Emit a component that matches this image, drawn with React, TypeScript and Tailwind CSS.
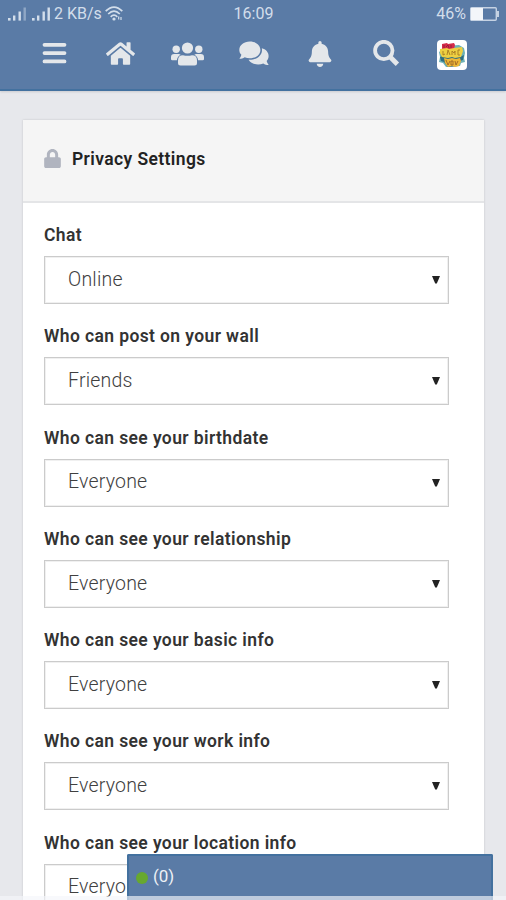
import { FaBell, FaHome, FaLock } from "react-icons/fa";

const settings = [
  { label: "Chat", value: "Online" },
  { label: "Who can post on your wall", value: "Friends" },
  { label: "Who can see your birthdate", value: "Everyone" },
  { label: "Who can see your relationship", value: "Everyone" },
  { label: "Who can see your basic info", value: "Everyone" },
  { label: "Who can see your work info", value: "Everyone" },
  { label: "Who can see your location info", value: "Everyone" },
];

function Signal({ weak = false }: { weak?: boolean }) {
  return (
    <svg className="h-[14px] w-[19px]" viewBox="0 0 19 14" fill="currentColor">
      <rect x="0" y="11" width="2.6" height="2.6" />
      <rect x="5" y="8.5" width="2.4" height="5.1" />
      <rect x="10.5" y="4.5" width="2.4" height="9.1" />
      <rect x="15.5" y=".5" width="2.4" height="13.1" opacity={weak ? 0.45 : 1} />
    </svg>
  );
}

function Wifi() {
  return (
    <svg className="h-[15px] w-[18px]" viewBox="0 0 18 15" fill="none" stroke="currentColor" strokeWidth="1.7">
      <path d="M.7 5.2Q9-3 17.3 5.2M3.2 8Q9 2.2 14.8 8M5.7 10.8Q9 7.4 12.3 10.8" />
      <circle cx="9" cy="13" r="1.6" fill="currentColor" stroke="none" />
      <path d="M13.7 13.5v-3M16 11v3" strokeWidth="1.2" />
    </svg>
  );
}

function Battery() {
  return (
    <svg className="h-[14px] w-[29px]" viewBox="0 0 29 14">
      <rect x=".7" y=".7" width="25.6" height="12.6" rx="1" fill="none" stroke="#c5d2e3" strokeWidth="1.4" />
      <rect x="1" y="1" width="12" height="12" fill="#f3f6fa" />
      <rect x="27" y="4" width="2" height="6" fill="#c5d2e3" />
    </svg>
  );
}

function Avatar() {
  return (
    <svg className="h-[30px] w-[30px]" viewBox="0 0 30 30">
      <rect width="30" height="30" rx="4" fill="#fff" />
      <path d="M2 12l3-2 3-4 14-1 5 3 1 5-1 5 1 4-4 1-1 3-14 1-3-4-4-1 1-5z" fill="#6db2b7" />
      <path d="M3 17l3-1 17 1 4-2-1 5-3 1-2 5-10 1-4-5-3-1z" fill="#2d6d83" />
      <path d="M5 4l5-1 1 1 6-1 1 2-1 4-6 1-6-1z" fill="#d42b49" />
      <path d="M3 9l7-1 2 1 5-1 8-1 1 4-2 6-6 1-3-1-4 1-6-1-2-4z" fill="#edcf42" />
      <path d="M7 18l4 1 4-1 4 1 4-1 1 3-2 5-4 1-3-1-4 1-3-4z" fill="#edb735" />
      <path d="M6 11v4l2-1M10 15l1-5 2 5M15 15v-4l2 2 1-2v4M23 10h-2v5h2" fill="none" stroke="#a47923" strokeWidth=".9" />
      <path d="M9 20l2 5 2-4M14 21v4h2v-4zM18 21l1 4 2-4" fill="none" stroke="#9a6426" strokeWidth=".9" />
      <path d="M7 5v3M9 7l2-2 1 3M14 5v3" fill="none" stroke="#861d39" strokeWidth=".8" />
    </svg>
  );
}

function StatusBar() {
  return (
    <div className="grid h-[27px] grid-cols-3 items-center pl-[8px] pr-[7px] text-[16px] text-[#d3deeb]">
      <div className="flex items-center whitespace-nowrap">
        <Signal weak />
        <span className="w-[5px]" />
        <Signal />
        <span className="ml-[3px] mr-[3px]">2 KB/s</span>
        <Wifi />
      </div>
      <span className="text-center">16:09</span>
      <div className="flex items-center justify-end gap-[4px]">
        <span>46%</span>
        <Battery />
      </div>
    </div>
  );
}

function NavBar() {
  return (
    <nav className="grid grid-cols-[repeat(7,66.3px)] items-center justify-items-center pt-[13px] pl-[21.5px] text-[#e4e7ea]">
      <svg className="-mt-[3px] size-[27px]" viewBox="0 0 27 27" stroke="currentColor" strokeWidth="3.8" strokeLinecap="round">
        <path d="M3.5 4.8h20M3.5 13.1h20M3.5 21.4h20" />
      </svg>
      <FaHome className="-mt-[3px] size-[29px]" />
      <svg className="-mt-[3px] h-[24px] w-[33px]" viewBox="0 0 33 24" fill="currentColor">
        <circle cx="16.5" cy="6" r="5.6" />
        <circle cx="5.2" cy="7.2" r="3.7" />
        <circle cx="27.8" cy="7.2" r="3.7" />
        <path d="M7 21v-2.500Q7 13.200 12 13.200Q16.500 14.500 21 13.200Q26 13.200 26 18.500V21Q26 23.500 23.500 23.500H9.500Q7 23.500 7 21z" />
        <path d="M0 15.200Q0 12 3.200 12H7.500Q9 12 9.600 12.700Q6.300 14.500 5.900 18.300H1.300Q0 18.300 0 17zM33 15.200Q33 12 29.800 12H25.500Q24 12 23.400 12.700Q26.700 14.500 27.100 18.300H31.700Q33 18.300 33 17z" />
      </svg>
      <svg className="-mt-[3px] h-[25px] w-[30px]" viewBox="0 0 30 25" fill="currentColor">
        <path d="M10.800 .5C16.800 .5 21.400 4.100 21.400 8.900S16.800 17.300 10.800 17.300C8.900 17.300 7.200 16.900 5.700 16.200C4.200 17.200 2.300 17.700 .4 17.700C1.400 16.500 2.100 15.100 2.400 13.800C1 12.400 .3 10.800 .3 8.900C.3 4.100 4.800 .5 10.800 .5z" />
        <path d="M22.800 7.300C26.800 8.200 29.600 11.300 29.600 15C29.600 16.900 28.900 18.600 27.600 20C28 21.500 28.700 22.800 29.700 24C27.700 24 25.800 23.400 24.300 22.400C22.800 23.100 21.100 23.500 19.200 23.500C14.900 23.500 11.300 21.700 9.600 18.800C16.900 19.200 23 15 23 8.900Q23 8.100 22.800 7.300z" />
      </svg>
      <FaBell className="-mt-[3px] size-[26px]" />
      <svg className="-mt-[3px] size-[27px]" viewBox="0 0 27 27" fill="none" stroke="currentColor">
        <circle cx="10.8" cy="10.5" r="8.7" strokeWidth="3.8" />
        <path d="M17.2 17l7.2 7.2" strokeWidth="4.8" />
      </svg>
      <Avatar />
    </nav>
  );
}

function Setting({ label, value }: { label: string; value: string }) {
  return (
    <div className="mb-[20.25px]">
      <div className="h-[33px] text-[17.5px] leading-[24px] font-semibold tracking-[0.39px] text-[#333]">{label}</div>
      <div className="flex h-[48px] w-[405px] items-center justify-between border border-[#cbcbcb] bg-white pl-[23px] pr-[8px] shadow-[inset_0_0_0_1px_#f0f0f0]">
        <span className="pb-[1px] text-[19.5px] font-light tracking-[0.2px] text-[#404040]">{value}</span>
        <svg className="h-[8px] w-[8px]" viewBox="0 0 8 8" fill="#222">
          <path d="M0 0h8L4.8 7.5H3.2z" />
        </svg>
      </div>
    </div>
  );
}

export default function App() {
  return (
    <div className="relative h-[900px] w-[506px] overflow-hidden bg-[#e7e8ec] font-['Roboto',sans-serif]">
      <header className="h-[91px] border-b-2 border-[#43719f] bg-[#5a7ba6] shadow-[0_1px_2px_rgba(0,0,0,0.12)]">
        <StatusBar />
        <NavBar />
      </header>

      <main className="mt-[29px] ml-[23px] h-[800px] w-[461px] bg-white shadow-[0_0_2px_rgba(0,0,0,0.16)]">
        <div className="flex h-[83px] items-center border-b-2 border-[#e4e5e7] bg-[#f5f5f5] pb-[3px] pl-[21px]">
          <FaLock className="-mt-px h-[19px] w-[17px] text-[#b0b4bf]" />
          <h1 className="ml-[11px] text-[17.5px] font-semibold tracking-[0.39px] text-[#222]">Privacy Settings</h1>
        </div>
        <div className="pt-[20px] pl-[21px]">
          {settings.map((s) => (
            <Setting key={s.label} {...s} />
          ))}
        </div>
      </main>

      {/* chat dock */}
      <div className="absolute top-[854px] left-[127px] flex h-[46px] w-[366px] items-center rounded-t-[2px] border-2 border-b-0 border-[#43719f] bg-[#5a7ba6] pl-[7px] text-[17px] text-[#edf1f6]">
        <span className="mr-[5px] size-[12px] rounded-full bg-[#67a82f]" />
        <span className="pb-[2px]">(0)</span>
      </div>
      <div className="absolute inset-x-0 bottom-0 h-[4px] bg-[#f4f6fb]/65" />
    </div>
  );
}
